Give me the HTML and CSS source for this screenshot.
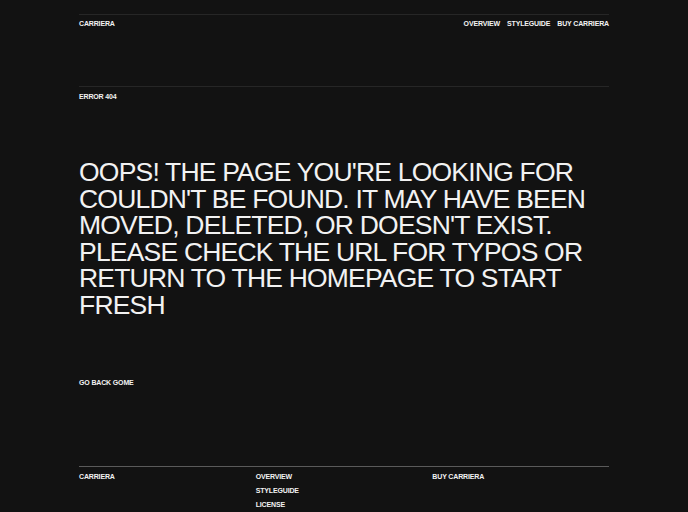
FILE: index.html
```html
<!DOCTYPE html>
<html lang="en">
<head>
<meta charset="utf-8">
<title>Carriera - 404</title>
<link rel="stylesheet" href="styles.css">
</head>
<body>
<div class="page">
  <header class="topbar">
    <a class="brand" href="#">CARRIERA</a>
    <nav class="nav">
      <a href="#">OVERVIEW</a>
      <a href="#">STYLEGUIDE</a>
      <a href="#">BUY CARRIERA</a>
    </nav>
  </header>
  <main class="main">
    <div class="label">ERROR 404</div>
    <h1 class="headline">OOPS! THE PAGE YOU'RE LOOKING FOR COULDN'T BE FOUND. IT MAY HAVE BEEN MOVED, DELETED, OR DOESN'T EXIST. PLEASE CHECK THE URL FOR TYPOS OR RETURN TO THE HOMEPAGE TO START FRESH</h1>
    <a class="back" href="#">GO BACK GOME</a>
  </main>
  <footer class="footer">
    <div class="col"><a href="#">CARRIERA</a></div>
    <div class="col">
      <a href="#">OVERVIEW</a>
      <a href="#">STYLEGUIDE</a>
      <a href="#">LICENSE</a>
    </div>
    <div class="col"><a href="#">BUY CARRIERA</a></div>
  </footer>
</div>
</body>
</html>
```
FILE: styles.css
```css
html, body {
  margin: 0;
  padding: 0;
  background: #121212;
  color: #f2f2f2;
  font-family: "Liberation Sans", Arial, sans-serif;
}
a {
  color: inherit;
  text-decoration: none;
}
.page {
  width: 530px;
  margin: 0 auto;
}
.topbar {
  margin-top: 14px;
  border-top: 1px solid #262626;
  padding-top: 5px;
  height: 66px;
  display: flex;
  justify-content: space-between;
  align-items: flex-start;
  font-size: 7px;
  line-height: 8px;
  font-weight: 700;
  letter-spacing: -0.15px;
  border-bottom: 1px solid #262626;
}
.nav {
  display: flex;
  gap: 7px;
}
.main {
  padding-top: 6px;
  height: 373px;
}
.label {
  font-size: 7px;
  line-height: 8px;
  font-weight: 700;
  letter-spacing: -0.15px;
}
.headline {
  margin: 58px 0 0 0;
  font-size: 26.5px;
  line-height: 26.6px;
  font-weight: 400;
  letter-spacing: -0.8px;
}
.back {
  display: block;
  margin-top: 60px;
  font-size: 7px;
  line-height: 8px;
  font-weight: 700;
  letter-spacing: -0.15px;
}
.footer {
  border-top: 1px solid #5a5a5a;
  padding-top: 6px;
  display: grid;
  grid-template-columns: repeat(3, 1fr);
  font-size: 7px;
  line-height: 8px;
  font-weight: 700;
  letter-spacing: -0.15px;
}
.col {
  display: flex;
  flex-direction: column;
  gap: 6px;
}
```
